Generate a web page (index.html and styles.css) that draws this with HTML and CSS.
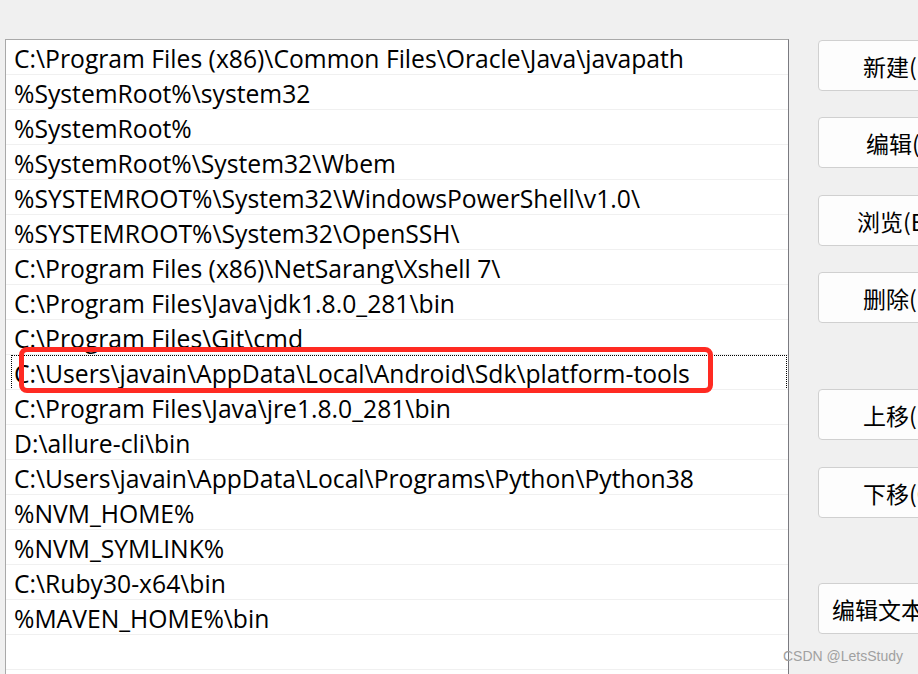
FILE: index.html
```html
<!DOCTYPE html>
<html lang="zh">
<head>
<meta charset="utf-8">
<title>编辑环境变量</title>
<link rel="stylesheet" href="styles.css">
</head>
<body>
<div class="dialog">
  <ul class="paths">
    <li class="row">C:\Program Files (x86)\Common Files\Oracle\Java\javapath</li>
    <li class="row">%SystemRoot%\system32</li>
    <li class="row">%SystemRoot%</li>
    <li class="row">%SystemRoot%\System32\Wbem</li>
    <li class="row">%SYSTEMROOT%\System32\WindowsPowerShell\v1.0\</li>
    <li class="row">%SYSTEMROOT%\System32\OpenSSH\</li>
    <li class="row">C:\Program Files (x86)\NetSarang\Xshell 7\</li>
    <li class="row">C:\Program Files\Java\jdk1.8.0_281\bin</li>
    <li class="row">C:\Program Files\Git\cmd</li>
    <li class="row focused">C:\Users\javain\AppData\Local\Android\Sdk\platform-tools</li>
    <li class="row">C:\Program Files\Java\jre1.8.0_281\bin</li>
    <li class="row">D:\allure-cli\bin</li>
    <li class="row">C:\Users\javain\AppData\Local\Programs\Python\Python38</li>
    <li class="row">%NVM_HOME%</li>
    <li class="row">%NVM_SYMLINK%</li>
    <li class="row">C:\Ruby30-x64\bin</li>
    <li class="row">%MAVEN_HOME%\bin</li>
    <li class="row"></li>
  </ul>
  <div class="actions">
    <button class="btn b-new">新建(N)</button>
    <button class="btn b-edit">编辑(E)</button>
    <button class="btn b-browse">浏览(B)...</button>
    <button class="btn b-del">删除(D)</button>
    <button class="btn b-up">上移(U)</button>
    <button class="btn b-down">下移(O)</button>
    <button class="btn b-text">编辑文本(T)...</button>
  </div>
</div>
<div class="highlight"></div>
<div class="watermark">CSDN @LetsStudy</div>
</body>
</html>
```

FILE: styles.css
```css
html, body {
  margin: 0;
  padding: 0;
  width: 918px;
  height: 674px;
  overflow: hidden;
  background: #f0f0f0;
  font-family: "Open Sans", "Noto Sans CJK SC", sans-serif;
  position: relative;
}

.dialog {
  display: flex;
  align-items: flex-start;
  padding: 39px 0 0 5px;
}

.paths {
  list-style: none;
  margin: 0;
  padding: 0;
  width: 782px;
  height: 660px;
  flex: none;
  background: #ffffff;
  border: 1px solid #a9a9a9;
  border-right-color: #7a7a80;
  border-bottom: none;
}

.row {
  position: relative;
  height: 34px;
  line-height: 38px;
  border-bottom: 1px solid #f0f0f0;
  padding-left: 8px;
  font-size: 24.7px;
  color: #000;
  white-space: nowrap;
  overflow: hidden;
}

.row.focused::before {
  content: "";
  position: absolute;
  left: 5px;
  right: 1px;
  top: 0;
  bottom: -1px;
  border: 1px dotted #000;
}

.actions {
  display: flex;
  flex-direction: column;
  margin-left: 29px;
  flex: none;
}

.btn {
  width: 200px;
  height: 51px;
  margin: 0;
  padding: 0;
  background: #fdfdfd;
  border: 1px solid #d0d0d0;
  border-radius: 4px;
  font-family: "Noto Sans CJK SC", sans-serif;
  font-size: 23px;
  color: #000;
  text-align: left;
  padding-left: 44px;
}

.b-new { margin-top: 1px; }
.b-edit { margin-top: 26px; padding-left: 47px; }
.b-browse { margin-top: 27px; padding-left: 38px; }
.b-del { margin-top: 26px; }
.b-up { margin-top: 66px; }
.b-down { margin-top: 27px; }
.b-text { margin-top: 65px; padding-left: 13px; }

.highlight {
  position: absolute;
  left: 19px;
  top: 347px;
  width: 684px;
  height: 36px;
  border: 5px solid #ff2a22;
  border-radius: 8px;
}

.watermark {
  position: absolute;
  left: 783px;
  top: 648px;
  font-family: "Liberation Sans", sans-serif;
  font-size: 14px;
  color: #a0a0a0;
}
```
